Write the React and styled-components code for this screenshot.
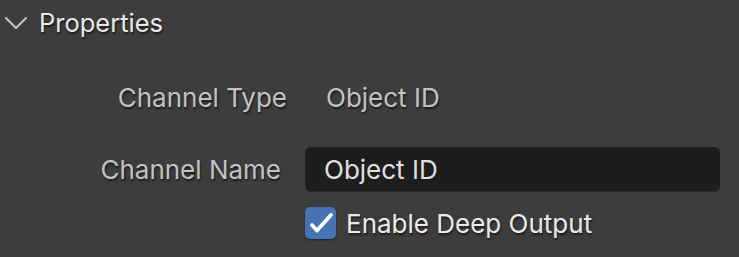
import React from "react";
import styled, { createGlobalStyle } from "styled-components";

const GlobalStyle = createGlobalStyle`
  html, body {
    margin: 0;
    padding: 0;
    background: #3d3d3d;
  }
  body {
    font-family: Inter, "Noto Sans", sans-serif;
    -webkit-font-smoothing: antialiased;
  }
`;

const Panel = styled.div`
  width: 739px;
  height: 257px;
  background: #3d3d3d;
  overflow: hidden;
  box-sizing: border-box;
`;

const Header = styled.div`
  height: 44px;
  display: flex;
  align-items: center;
  padding-left: 4px;
  gap: 11px;
  color: #e8e8e8;
  font-size: 25.5px;
  text-shadow: 1px 2px 2px rgba(0, 0, 0, 0.6);
`;

const Chevron = styled.svg`
  width: 24px;
  height: 14px;
  margin-top: 2px;
`;

const Body = styled.div`
  display: grid;
  grid-template-columns: 305px 415px;
  padding-top: 31px;
`;

const Label = styled.div`
  height: 44px;
  display: flex;
  align-items: center;
  justify-content: flex-end;
  padding-right: ${(p) => p.$pad}px;
  color: #c2c2c2;
  font-size: 26px;
  text-shadow: 1px 2px 2px rgba(0, 0, 0, 0.55);
  margin-bottom: ${(p) => p.$mb || 0}px;
`;

const Value = styled.div`
  height: 44px;
  display: flex;
  align-items: center;
  padding-left: 21px;
  color: #c2c2c2;
  font-size: 26px;
  text-shadow: 1px 2px 2px rgba(0, 0, 0, 0.55);
`;

const Field = styled.div`
  height: 44px;
  display: flex;
  align-items: center;
  padding-left: 19px;
  background: #1d1d1d;
  border-radius: 6px;
  color: #e0e0e0;
  font-size: 26px;
  box-shadow: 0 1px 1px rgba(0, 0, 0, 0.35);
`;

const CheckRow = styled.label`
  grid-column: 2;
  height: 34px;
  margin-top: 15px;
  display: flex;
  align-items: center;
  gap: 10px;
  color: #eaeaea;
  font-size: 26px;
  text-shadow: 1px 2px 2px rgba(0, 0, 0, 0.55);
`;

const Box = styled.span`
  width: 31px;
  height: 32px;
  border-radius: 5px;
  background: #4772b3;
  display: flex;
  box-shadow: 0 1px 2px rgba(0, 0, 0, 0.5);
`;

export default function App() {
  return (
    <Panel>
      <GlobalStyle />
      <Header>
        <Chevron viewBox="0 0 24 14">
          <path d="M2 2 L12 12 L22 2" fill="none" stroke="#bdbdbd" strokeWidth="2.2" strokeLinecap="round" strokeLinejoin="round" />
        </Chevron>
        Properties
      </Header>
      <Body>
        <Label $pad={18} $mb={28}>Channel Type</Label>
        <Value>Object ID</Value>
        <Label $pad={24}>Channel Name</Label>
        <Field>Object ID</Field>
        <CheckRow>
          <Box>
            <svg width="31" height="32" viewBox="0 0 31 32">
              <path d="M7 18 L12 23.5 L26 8" fill="none" stroke="#fff" strokeWidth="3.8" strokeLinecap="round" strokeLinejoin="round" />
            </svg>
          </Box>
          Enable Deep Output
        </CheckRow>
      </Body>
    </Panel>
  );
}
